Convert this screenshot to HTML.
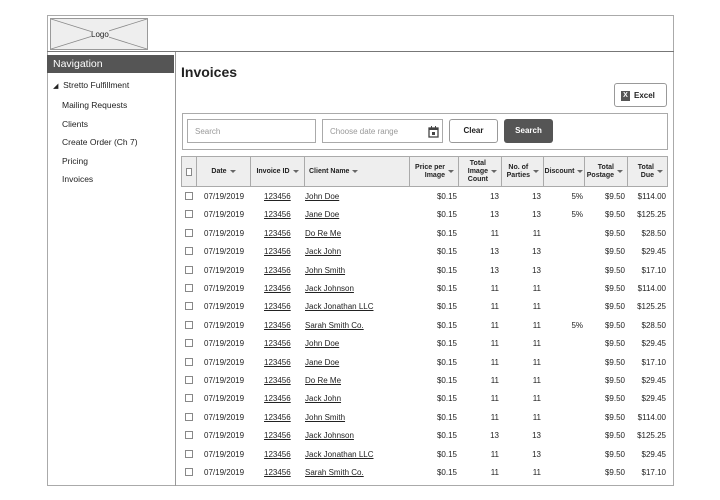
<!DOCTYPE html><html><head><style>
*{box-sizing:border-box;margin:0;padding:0}
body{width:720px;height:500px;background:#fff;font-family:"Liberation Sans",Arial,sans-serif;color:#222;position:relative;overflow:hidden}
.a{position:absolute}
.t{font-size:8.5px}
.r{position:absolute;left:181px;width:487px;height:18px;font-size:8px}
.r span{position:absolute;top:5px}
.u{text-decoration:underline}
.cb{position:absolute;left:4px;top:5px;width:8px;height:8px;border:1px solid #888;background:#fff}
.h{position:absolute;top:156px;height:31px;border:1px solid #aaa;background:#eee;font-size:7px;font-weight:bold;display:flex;align-items:center;padding:0 4px;line-height:8px}
.ar{display:inline-block;border-left:3px solid transparent;border-right:3px solid transparent;border-top:3px solid #666;margin-left:3px;vertical-align:middle}
</style></head><body>
<div class="a" style="left:47px;top:15px;width:627px;height:471px;border:1px solid #aaa"></div>
<div class="a" style="left:50px;top:18px;width:98px;height:32px;border:1px solid #999;background:#eee"><svg width="96" height="30" style="position:absolute;left:0;top:0"><line x1="0" y1="0" x2="96" y2="30" stroke="#888" stroke-width=".8"/><line x1="96" y1="0" x2="0" y2="30" stroke="#888" stroke-width=".8"/></svg><span class="a t" style="left:40px;top:11px;background:#eee;font-size:8px">Logo</span></div>
<div class="a" style="left:47px;top:51px;width:627px;height:1px;background:#777"></div>
<div class="a" style="left:175px;top:52px;width:1px;height:434px;background:#999"></div>
<div class="a" style="left:47px;top:55px;width:127px;height:18px;background:#555;color:#fff;font-size:10.5px;padding:3px 6px">Navigation</div>
<div class="a" style="left:53px;top:80px;font-size:8.5px"><span style="font-size:7px">◢</span>&nbsp; Stretto Fulfillment</div>
<div class="a t" style="left:62px;top:100px">Mailing Requests</div>
<div class="a t" style="left:62px;top:119px">Clients</div>
<div class="a t" style="left:62px;top:137px">Create Order (Ch 7)</div>
<div class="a t" style="left:62px;top:156px">Pricing</div>
<div class="a t" style="left:62px;top:174px">Invoices</div>
<div class="a" style="left:181px;top:64px;font-size:14px;font-weight:bold">Invoices</div>
<div class="a" style="left:614px;top:83px;width:53px;height:24px;border:1px solid #999;border-radius:3px;font-size:8px;font-weight:bold;padding:7px 0 0 6px"><span style="display:inline-block;width:9px;height:10px;background:#555;color:#fff;font-size:7px;text-align:center;line-height:10px;vertical-align:middle;margin-right:4px">X</span>Excel</div>
<div class="a" style="left:182px;top:113px;width:486px;height:37px;border:1px solid #aaa"></div>
<div class="a" style="left:187px;top:119px;width:129px;height:24px;border:1px solid #aaa;font-size:8px;color:#999;padding:7px 7px">Search</div>
<div class="a" style="left:322px;top:119px;width:121px;height:24px;border:1px solid #aaa;font-size:8px;color:#999;padding:7px 7px">Choose date range<svg class="a" style="left:105px;top:6px" width="11" height="12"><rect x="1" y="2" width="9" height="9" fill="none" stroke="#444" stroke-width="1.3"/><rect x="1" y="2" width="9" height="2" fill="#444"/><rect x="3" y="0" width="1" height="3" fill="#444"/><rect x="7" y="0" width="1" height="3" fill="#444"/><rect x="4" y="6" width="3" height="3" fill="#444"/></svg></div>
<div class="a" style="left:449px;top:119px;width:49px;height:24px;border:1px solid #999;border-radius:3px;font-size:8px;font-weight:bold;text-align:center;line-height:22px">Clear</div>
<div class="a" style="left:504px;top:119px;width:49px;height:24px;background:#555;border-radius:3px;font-size:8px;font-weight:bold;color:#fff;text-align:center;line-height:24px">Search</div>
<div class="h" style="left:181px;width:16px"><div style="width:8px;height:8px;border:1px solid #888;background:#fff"></div></div>
<div class="h" style="left:196px;width:55px;justify-content:center">Date<i class="ar"></i></div>
<div class="h" style="left:250px;width:55px;justify-content:center">Invoice ID<i class="ar"></i></div>
<div class="h" style="left:304px;width:106px">Client Name<i class="ar"></i></div>
<div class="h" style="left:409px;width:50px;justify-content:flex-end;text-align:right">Price per<br>Image<i class="ar"></i></div>
<div class="h" style="left:458px;width:44px;justify-content:flex-end;text-align:center">Total<br>Image<br>Count<i class="ar"></i></div>
<div class="h" style="left:501px;width:43px;justify-content:flex-end;text-align:center">No. of<br>Parties<i class="ar"></i></div>
<div class="h" style="left:543px;width:42px;justify-content:center">Discount<i class="ar"></i></div>
<div class="h" style="left:584px;width:44px;justify-content:flex-end;text-align:right">Total<br>Postage<i class="ar"></i></div>
<div class="h" style="left:627px;width:41px;justify-content:flex-end;text-align:right">Total<br>Due<i class="ar"></i></div>
<div id="rows"></div>
<script>
var d=[["John Doe",13,13,"5%","114.00"],["Jane Doe",13,13,"5%","125.25"],["Do Re Me",11,11,"","28.50"],["Jack John",13,13,"","29.45"],["John Smith",13,13,"","17.10"],["Jack Johnson",11,11,"","114.00"],["Jack Jonathan LLC",11,11,"","125.25"],["Sarah Smith Co.",11,11,"5%","28.50"],["John Doe",11,11,"","29.45"],["Jane Doe",11,11,"","17.10"],["Do Re Me",11,11,"","29.45"],["Jack John",11,11,"","29.45"],["John Smith",11,11,"","114.00"],["Jack Johnson",13,13,"","125.25"],["Jack Jonathan LLC",11,13,"","29.45"],["Sarah Smith Co.",11,11,"","17.10"]];
var h="";d.forEach(function(r,i){var y=187+i*18.4;
h+='<div class="r" style="top:'+y+'px"><div class="cb"></div><span style="left:23px">07/19/2019</span><span class="u" style="left:83px">123456</span><span class="u" style="left:124px">'+r[0]+'</span><span style="right:211px">$0.15</span><span style="right:169px">'+r[1]+'</span><span style="right:127px">'+r[2]+'</span><span style="right:85px">'+r[3]+'</span><span style="right:43px">$9.50</span><span style="right:2px">$'+r[4]+'</span></div>';});
document.getElementById("rows").innerHTML=h;
</script>
</body></html>
